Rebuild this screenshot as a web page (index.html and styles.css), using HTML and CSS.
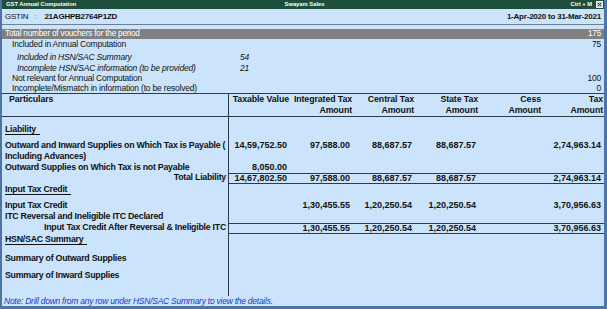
FILE: index.html
```html
<!DOCTYPE html>
<html>
<head>
  <meta charset="UTF-8">
  <title>GST Annual Computation</title>
  <link rel="stylesheet" href="styles.css">
</head>
<body>
  <div class="window">
    <div class="title-bar">
      <span class="title">GST Annual Computation</span>
      <span class="company">Swayam Sales</span>
      <span class="shortcut">Ctrl + M
        <svg class="close-box" width="7" height="7" viewBox="0 0 7 7">
          <rect x="0.5" y="0.5" width="6" height="6" fill="#c8c8c8" stroke="#f0f0f0"/>
          <path d="M2 2 L5 5 M5 2 L2 5" stroke="#333" stroke-width="1"/>
        </svg>
      </span>
    </div>

    <div class="gstin-row">
      <div><span class="gstin-label">GSTIN</span><span class="colon">:</span><strong>21AGHPB2764P1ZD</strong></div>
      <strong>1-Apr-2020 to 31-Mar-2021</strong>
    </div>
    <div class="gap"></div>

    <div class="band">
      <span>Total number of vouchers for the period</span>
      <span>175</span>
    </div>

    <div class="counts">
      <div class="count-row first">
        <span class="count-label">Included in Annual Computation</span><span></span><span class="count-total">75</span>
      </div>
      <div class="count-row sub pad">
        <span class="count-label">Included in HSN/SAC Summary</span><span>54</span><span></span>
      </div>
      <div class="count-row sub">
        <span class="count-label">Incomplete HSN/SAC information (to be provided)</span><span>21</span><span></span>
      </div>
      <div class="count-row">
        <span class="count-label">Not relevant for Annual Computation</span><span></span><span class="count-total">100</span>
      </div>
      <div class="count-row">
        <span class="count-label">Incomplete/Mismatch in information (to be resolved)</span><span></span><span class="count-total">0</span>
      </div>
    </div>

    <div class="report">
      <div class="row head">
        <div class="label">Particulars</div>
        <div>Taxable Value</div>
        <div>Integrated Tax<br>Amount</div>
        <div>Central Tax<br>Amount</div>
        <div>State Tax<br>Amount</div>
        <div>Cess<br>Amount</div>
        <div>Tax<br>Amount</div>
      </div>

      <div class="row section first-section">
        <div class="label"><span class="heading">Liability</span></div>
        <div></div><div></div><div></div><div></div><div></div><div></div>
      </div>
      <div class="row wrap">
        <div class="label">Outward and Inward Supplies on Which Tax is Payable (<br>Including Advances)</div>
        <div class="num">14,59,752.50</div>
        <div class="num">97,588.00</div>
        <div class="num">88,687.57</div>
        <div class="num">88,687.57</div>
        <div class="num"></div>
        <div class="num">2,74,963.14</div>
      </div>
      <div class="row line">
        <div class="label">Outward Supplies on Which Tax is not Payable</div>
        <div class="num">8,050.00</div>
        <div></div><div></div><div></div><div></div><div></div>
      </div>
      <div class="row total">
        <div class="label">Total Liability</div>
        <div class="num">14,67,802.50</div>
        <div class="num">97,588.00</div>
        <div class="num">88,687.57</div>
        <div class="num">88,687.57</div>
        <div class="num"></div>
        <div class="num">2,74,963.14</div>
      </div>

      <div class="row section">
        <div class="label"><span class="heading">Input Tax Credit</span></div>
        <div></div><div></div><div></div><div></div><div></div><div></div>
      </div>
      <div class="row line gap-4">
        <div class="label">Input Tax Credit</div>
        <div></div>
        <div class="num">1,30,455.55</div>
        <div class="num">1,20,250.54</div>
        <div class="num">1,20,250.54</div>
        <div class="num"></div>
        <div class="num">3,70,956.63</div>
      </div>
      <div class="row line tall">
        <div class="label">ITC Reversal and Ineligible ITC Declared</div>
        <div></div><div></div><div></div><div></div><div></div><div></div>
      </div>
      <div class="row total">
        <div class="label">Input Tax Credit After Reversal &amp; Ineligible ITC</div>
        <div class="num"></div>
        <div class="num">1,30,455.55</div>
        <div class="num">1,20,250.54</div>
        <div class="num">1,20,250.54</div>
        <div class="num"></div>
        <div class="num">3,70,956.63</div>
      </div>

      <div class="row section short">
        <div class="label"><span class="heading">HSN/SAC Summary</span></div>
        <div></div><div></div><div></div><div></div><div></div><div></div>
      </div>
      <div class="row line gap-7">
        <div class="label">Summary of Outward Supplies</div>
        <div></div><div></div><div></div><div></div><div></div><div></div>
      </div>
      <div class="row line gap-5">
        <div class="label">Summary of Inward Supplies</div>
        <div></div><div></div><div></div><div></div><div></div><div></div>
      </div>
      <div class="row filler">
        <div class="label"></div>
        <div></div><div></div><div></div><div></div><div></div><div></div>
      </div>
    </div>

    <div class="note">Note: Drill down from any row under HSN/SAC Summary to view the details.</div>
  </div>
</body>
</html>
```

FILE: styles.css
```css
:root {
  --bg: #cbe4fb;
  --rule: #2f3b48;
  --frame: #4e73a6;
  --ink: #111;
}

html, body {
  margin: 0;
  padding: 0;
  background: var(--bg);
}

body {
  width: 607px;
  height: 309px;
  font-family: "Liberation Sans", Arial, sans-serif;
  color: var(--ink);
}

.window {
  box-sizing: border-box;
  width: 607px;
  height: 309px;
  border-left: 2px solid var(--frame);
  border-right: 3px solid var(--frame);
  border-bottom: 3px solid var(--frame);
  background: var(--bg);
}

/* title bar */
.title-bar {
  height: 9px;
  background: #1e4e3c;
  color: #fff;
  font-size: 5.8px;
  font-weight: bold;
  line-height: 9px;
  display: grid;
  grid-template-columns: 1fr auto 1fr;
  padding: 0 1px 0 4px;
}

.company {
  text-align: center;
}

.shortcut {
  display: flex;
  justify-content: flex-end;
  align-items: center;
  gap: 4px;
}

.close-box {
  display: block;
}

/* gstin + period */
.gstin-row {
  height: 15px;
  display: flex;
  justify-content: space-between;
  align-items: center;
  padding: 0 3px 0 3px;
  font-size: 8px;
  letter-spacing: -0.22px;
  border-bottom: 1px solid #6e7f90;
}

.colon {
  margin: 0 8px 0 6px;
  color: #555;
}

.gap {
  height: 4px;
}

.band {
  height: 10px;
  background: #808080;
  color: #fff;
  font-size: 8.2px;
  letter-spacing: -0.2px;
  line-height: 10px;
  display: flex;
  justify-content: space-between;
  padding: 0 3px;
}

/* voucher counts */
.count-row {
  display: grid;
  grid-template-columns: 238px 40px 1fr;
  height: 10px;
  line-height: 10px;
  font-size: 8.5px;
  letter-spacing: -0.2px;
  white-space: nowrap;
}

.count-row.first {
  height: 11px;
  line-height: 11px;
}

.count-row.pad {
  height: 13px;
  padding-top: 2px;
  box-sizing: border-box;
  line-height: 11px;
}

.count-label {
  padding-left: 10px;
}

.count-row.sub .count-label {
  padding-left: 15px;
  font-style: italic;
}

.count-row.sub span:nth-child(2) {
  font-style: italic;
}

.count-total {
  text-align: right;
  padding-right: 3px;
}

/* report grid */
.row {
  display: grid;
  grid-template-columns: 227px 61px 63px 62px 64px 63px 1fr;
  box-sizing: border-box;
  font-weight: bold;
  font-size: 8.8px;
}

.row > div {
  box-sizing: border-box;
  line-height: 11px;
  white-space: nowrap;
}

.row > .label {
  border-right: 1px solid var(--rule);
  padding-left: 3px;
  letter-spacing: -0.25px;
}

.row.head {
  height: 24px;
  border-top: 1px solid var(--rule);
  border-bottom: 1px solid var(--rule);
}

.row.head > div {
  text-align: right;
  padding-right: 1px;
  letter-spacing: -0.1px;
}

.row.head > .label {
  text-align: left;
  padding-left: 7px;
}

.num {
  text-align: right;
  padding-right: 3px;
  font-size: 9px;
}

.heading {
  display: inline-block;
  padding-right: 4px;
  border-bottom: 1px solid var(--ink);
  line-height: 10px;
}

.row.section {
  height: 12px;
}

.row.section.first-section {
  height: 19px;
}

.row.section.first-section > div {
  padding-top: 7px;
}

.row.section.short {
  height: 11px;
}

.row.wrap {
  height: 26px;
}

.row.wrap > div {
  padding-top: 4px;
  line-height: 10.5px;
}

.row.line {
  height: 11px;
}

.row.line.tall {
  height: 12px;
}

.row.gap-4 {
  height: 15px;
}

.row.gap-4 > div {
  padding-top: 4px;
}

.row.gap-7 {
  height: 19px;
}

.row.gap-7 > div {
  padding-top: 7px;
  line-height: 12px;
}

.row.gap-5 {
  height: 17px;
}

.row.gap-5 > div {
  padding-top: 5px;
  line-height: 12px;
}

.row.total {
  height: 11px;
}

.row.total > div {
  line-height: 9px;
}

.row.total > div:not(.label) {
  border-top: 1px solid var(--rule);
  border-bottom: 1px solid var(--rule);
}

.row.total > .label {
  text-align: right;
  padding-right: 2px;
}

.row.filler {
  height: 15px;
}

.note {
  height: 10px;
  line-height: 10px;
  font-size: 8.5px;
  letter-spacing: -0.25px;
  font-style: italic;
  color: #2236c8;
  padding-left: 2px;
}
```
